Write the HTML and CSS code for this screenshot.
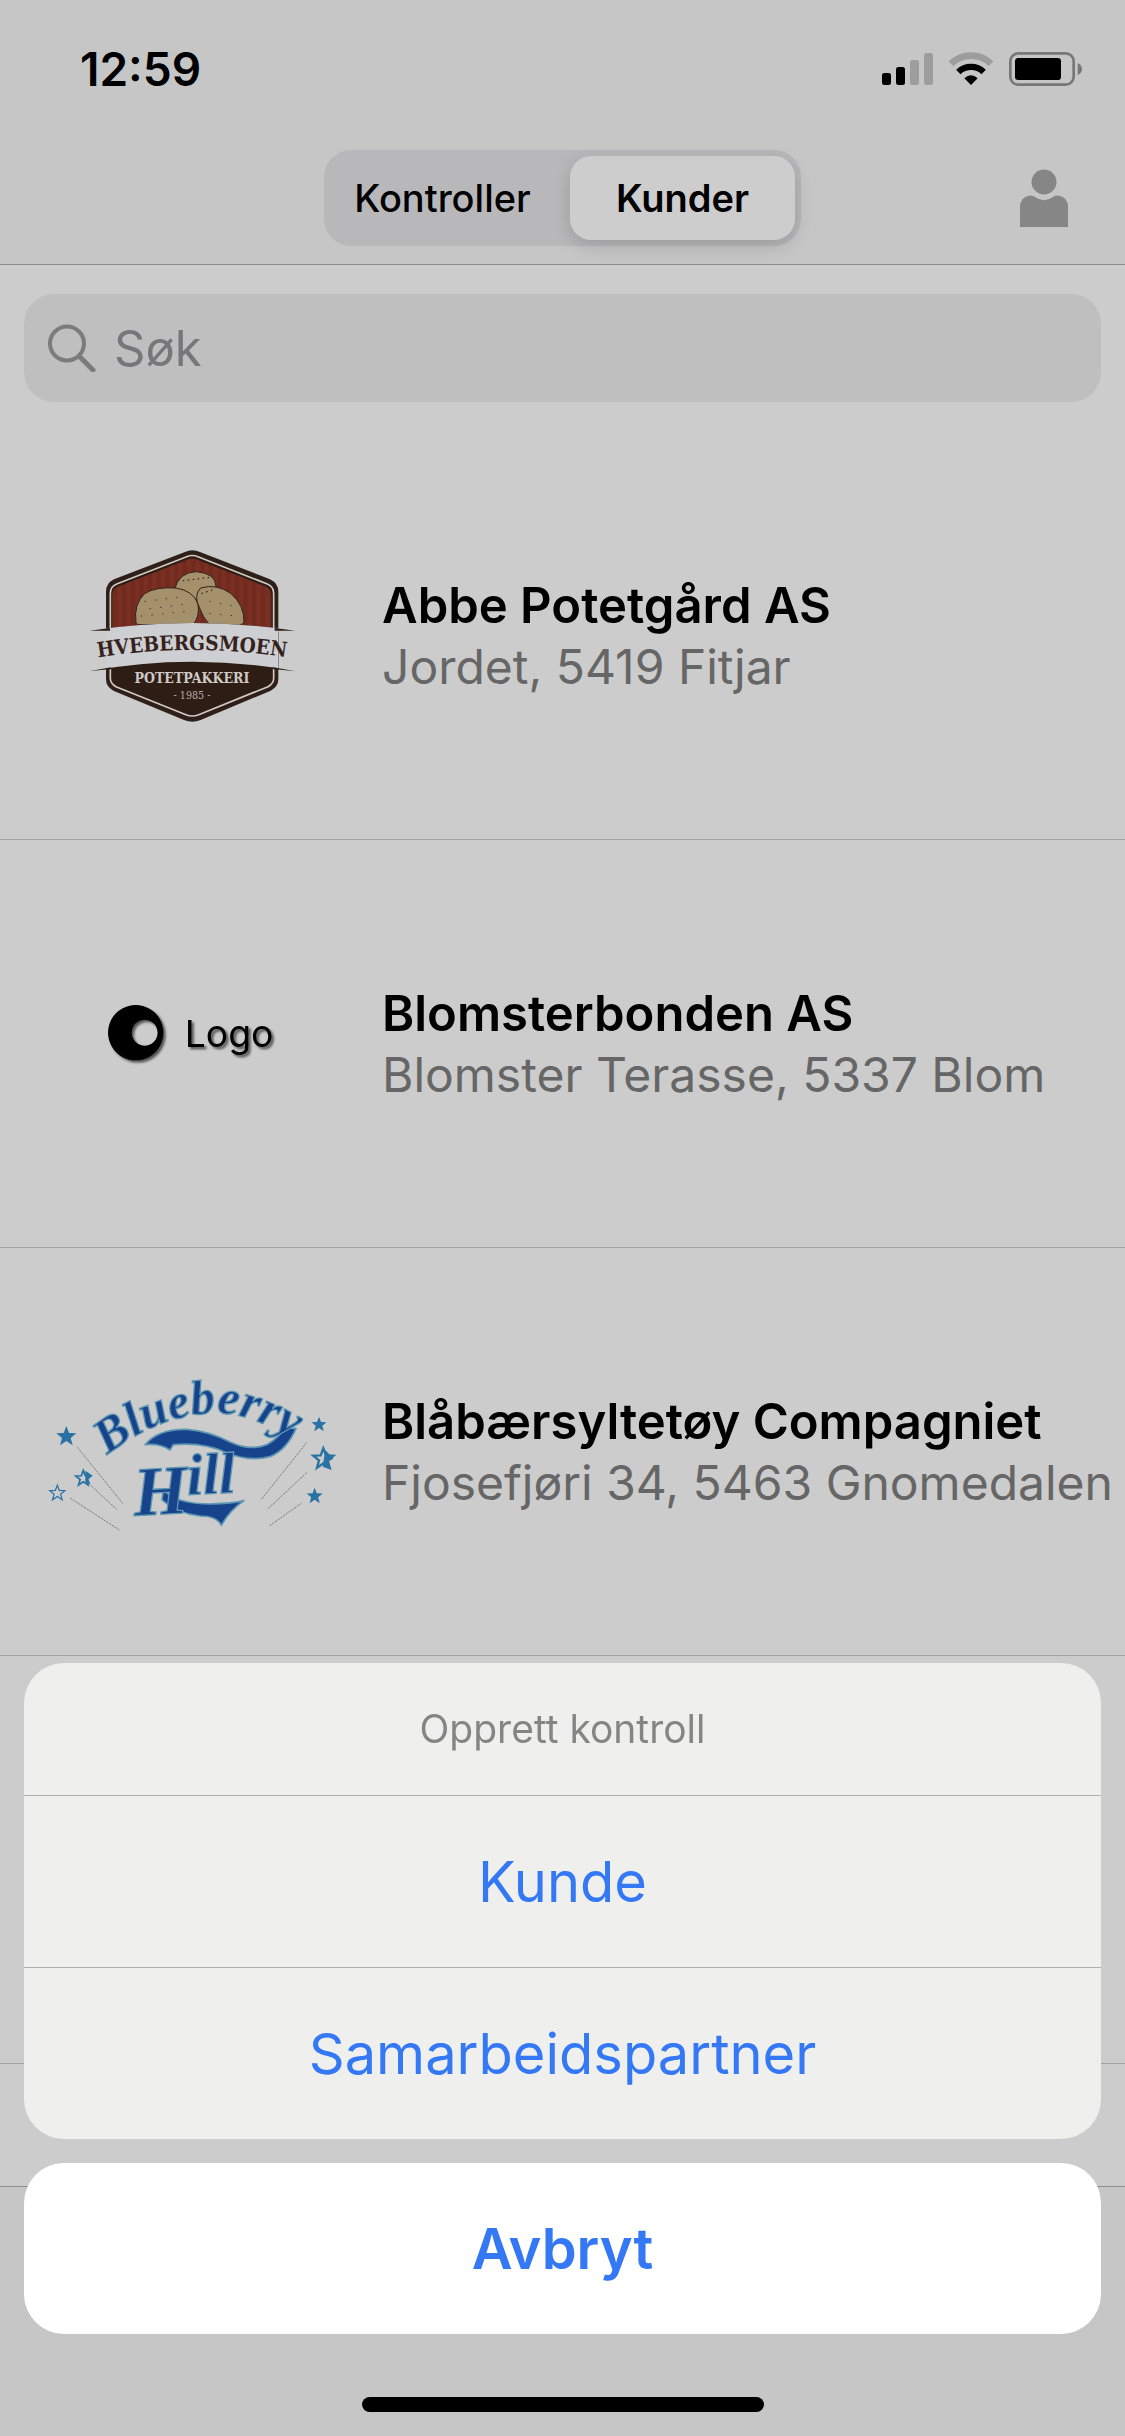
FILE: index.html
```html
<!DOCTYPE html>
<html lang="nb">
<head>
<meta charset="utf-8">
<meta name="viewport" content="width=device-width, initial-scale=1">
<title>Kunder</title>
<link rel="stylesheet" href="styles.css">
</head>
<body>
<div class="app">
  <header class="header">
    <div class="status">
      <time class="status-time">12:59</time>
      <div class="status-icons">
        <svg width="51" height="34" viewBox="0 0 153 102" aria-hidden="true">
          <rect x="0" y="63" width="27" height="36" rx="7"/>
          <rect x="42" y="45" width="27" height="54" rx="7"/>
          <rect x="84" y="24" width="27" height="75" rx="7" fill="#9d9d9d"/>
          <rect x="126" y="3" width="27" height="96" rx="7" fill="#9d9d9d"/>
        </svg>
        <svg width="46" height="34" viewBox="0 0 138 102" aria-hidden="true">
          <path d="M9 35A87 87 0 0 1 129 35" fill="none" stroke="#9d9d9d" stroke-width="20"/>
          <path d="M31 60A55 55 0 0 1 107 60" fill="none" stroke="#000" stroke-width="19"/>
          <path d="M49 79Q69 60 89 79L69 99Z"/>
        </svg>
        <svg width="73" height="34" viewBox="0 0 219 102" aria-hidden="true">
          <rect x="4" y="4" width="190" height="94" rx="24" fill="none" stroke="#777" stroke-width="8"/>
          <rect x="18" y="18" width="138" height="66" rx="10"/>
          <path d="M206 33q13 6 13 18t-13 18z" fill="#777"/>
        </svg>
      </div>
    </div>
    <nav class="nav">
      <div class="segments">
        <button class="segment" type="button">Kontroller</button>
        <button class="segment segment-active" type="button">Kunder</button>
      </div>
      <button class="profile" type="button" aria-label="Profil">
        <svg width="48" height="58" viewBox="0 0 48 58" aria-hidden="true">
          <ellipse cx="24" cy="13" rx="12.500" ry="12.500"/>
          <path d="M0 58V38Q0 28 10 26.500Q13 26 15 28Q24 34.500 33 28Q35 26 38 26.500Q48 28 48 38V58Z"/>
        </svg>
      </button>
    </nav>
  </header>

  <main class="content">
    <div class="search-area">
      <label class="search">
        <svg width="48" height="48" viewBox="0 0 48 48" aria-hidden="true">
          <circle cx="19" cy="19.500" r="17" fill="none" stroke="#7c7c7d" stroke-width="4"/>
          <path d="M32 33L45 46" fill="none" stroke="#7c7c7d" stroke-width="5" stroke-linecap="round"/>
        </svg>
        <input class="search-input" type="search" placeholder="Søk" aria-label="Søk">
      </label>
    </div>

    <ul class="customers">
      <li class="customer">
        <svg class="customer-logo" width="250" height="210" viewBox="-9 3 750 630" role="img" aria-label="Hvebergsmoen Potetpakkeri">
          <defs>
            <pattern id="stripes" width="26" height="26" patternUnits="userSpaceOnUse">
              <rect width="26" height="26" fill="#7b2f21"/>
              <rect width="13" height="26" fill="#702a20"/>
            </pattern>
            <path id="arch" d="M46 388Q366 332 686 388"/>
          </defs>
          <path d="M345 66Q367 56 390 66L600 148Q625 160 625 185V448Q625 470 602 482L392 570Q367 580 342 570L130 482Q108 470 108 448V185Q108 160 132 148Z" fill="#2e2019"/>
          <path d="M350 80Q367 73 384 80L592 162Q611 170 611 190V445Q611 461 594 470L386 554Q367 562 348 554L138 470Q121 461 121 445V190Q121 170 140 162Z" fill="#2e1d15" stroke="#d0c9c4" stroke-width="5"/>
          <path d="M350 90Q367 82 384 90L588 170Q604 178 604 194V300H127V194Q127 178 143 170Z" fill="url(#stripes)"/>
          <g fill="#a5906c" stroke="#30211a" stroke-width="3">
            <path d="M313 180Q326 126 380 125Q436 130 438 168L420 220H340Z"/>
            <path d="M198 278Q190 222 225 190Q258 170 318 174Q370 182 384 222Q390 258 370 284H204Z"/>
            <path d="M388 232Q370 196 392 174Q440 160 482 190Q524 226 522 278L510 286H420Q398 262 388 232Z"/>
          </g>
          <g fill="none" stroke="#30211a" stroke-width="4" stroke-linecap="round">
            <path stroke-dasharray="1 14" d="M340 152L420 142M396 190l30-10"/>
            <path stroke-width="3" stroke-dasharray="1 31" d="M225 214L340 200M214 258L350 244M240 236l110-14M420 214l70 14M420 250l80 8"/>
          </g>
          <path d="M108 296Q366 262 625 296V420Q366 372 108 420Z" fill="#2e1d15"/>
          <path d="M56 302Q366 256 678 302L625 304V414L678 424Q366 366 56 424L108 414V304Z" fill="#cdcfd2"/>
          <path d="M58 302L120 294V302ZM676 302L614 294V302ZM58 424L122 412V417ZM676 424L610 412V417Z" fill="#2e2019"/>
          <text class="badge-name"><textPath href="#arch" startOffset="50%" text-anchor="middle">HVEBERGSMOEN</textPath></text>
          <text class="badge-kind" x="366" y="458" text-anchor="middle">POTETPAKKERI</text>
          <text class="badge-year" x="366" y="508" text-anchor="middle">- 1985 -</text>
        </svg>
        <div class="customer-text">
          <h2 class="customer-name">Abbe Potetgård AS</h2>
          <p class="customer-address">Jordet, 5419 Fitjar</p>
        </div>
      </li>
      <li class="customer">
        <svg class="customer-logo" width="210" height="110" viewBox="-9 27 630 330" role="img" aria-label="Logo">
          <defs>
            <filter id="shadow" x="-20%" y="-20%" width="150%" height="150%">
              <feDropShadow dx="7" dy="7" stdDeviation="3" flood-color="#000" flood-opacity="0.600"/>
            </filter>
          </defs>
          <g filter="url(#shadow)">
            <path fill-rule="evenodd" d="M137 75a83 83 0 1 0 .1 0zM164 119a39 39 0 1 1-.1 0z"/>
            <text class="plain-logo" x="284" y="200">Logo</text>
          </g>
        </svg>
        <div class="customer-text">
          <h2 class="customer-name">Blomsterbonden AS</h2>
          <p class="customer-address">Blomster Terasse, 5337 Blom</p>
        </div>
      </li>
      <li class="customer">
        <svg class="customer-logo" width="320" height="200" viewBox="6 6 960 600" role="img" aria-label="Blueberry Hill">
          <defs>
            <path id="wave" d="M232 316Q380 196 560 188Q700 196 850 310"/>
            <path id="star" d="M0-30L8-9L30-8L13 6L19 28L0 15L-19 28L-13 6L-30-8L-8-9Z"/>
          </defs>
          <g fill="#17428c" stroke="#5d97b2" stroke-width="5" stroke-linejoin="round">
            <path d="M345 284Q385 236 470 238Q540 244 600 276Q660 304 710 284Q750 262 762 232L798 236Q770 300 720 320Q660 336 590 308Q520 276 430 284L420 300Q390 280 345 284Z"/>
            <path d="M400 420Q440 462 540 462Q610 460 642 452Q600 480 574 526Q560 498 510 498Q440 490 396 450Z"/>
          </g>
          <text class="script"><textPath href="#wave">Blueberry</textPath></text>
          <g transform="rotate(-3 330 470)">
            <text class="script"><tspan class="script-cap" x="312" y="496">H</tspan><tspan class="script-tail" x="474" y="442">ill</tspan></text>
          </g>
          <g fill="#2872a4">
            <use href="#star" x="109" y="258"/>
            <use href="#star" transform="translate(867 223) scale(.75)"/>
            <use href="#star" transform="translate(854 437) scale(.8)"/>
          </g>
          <g fill="#ccc" stroke="#2872a4" stroke-width="7">
            <use href="#star" transform="translate(160 384) scale(.75)"/>
            <use href="#star" transform="translate(880 325)"/>
            <use href="#star" transform="translate(82 428) scale(.75)" stroke-width="5"/>
          </g>
          <path d="M166 362l20 14l-12 8l8 20l-16-8ZM886 300l24 26l-14 8l2 24l-20-8z" fill="#2872a4"/>
          <g fill="none" stroke="#555" stroke-width="2" stroke-dasharray="7 3">
            <path d="M142 292L280 462M184 408L260 478M120 444L268 540M830 278L694 448M830 368L712 478M814 460L718 528"/>
          </g>
        </svg>
        <div class="customer-text">
          <h2 class="customer-name">Blåbærsyltetøy Compagniet</h2>
          <p class="customer-address">Fjosefjøri 34, 5463 Gnomedalen</p>
        </div>
      </li>
      <li class="customer" aria-hidden="true"></li>
    </ul>
  </main>
  <footer class="toolbar"></footer>
</div>

<div class="overlay">
  <section class="sheet" aria-labelledby="sheet-title">
    <h1 class="sheet-title" id="sheet-title">Opprett kontroll</h1>
    <button class="sheet-action" type="button">Kunde</button>
    <button class="sheet-action" type="button">Samarbeidspartner</button>
  </section>
  <button class="sheet-cancel" type="button">Avbryt</button>
  <div class="home-indicator"></div>
</div>
</body>
</html>
```
FILE: styles.css
```css
* {
  box-sizing: border-box;
}

body {
  margin: 0;
  background: #ccc;
  color: #000;
  font-family: Inter, "Liberation Sans", sans-serif;
}

button {
  margin: 0;
  padding: 0;
  border: 0;
  background: none;
  color: inherit;
  font: inherit;
}

svg {
  display: block;
  flex: none;
}

.app {
  display: flex;
  flex-direction: column;
  min-height: 100vh;
  overflow: hidden;
}

.header {
  background: #c6c6c6;
  border-bottom: 1px solid #8c8c8c;
}

.status {
  display: flex;
  align-items: center;
  justify-content: space-between;
  height: 132px;
  padding: 6px 43px 0 80px;
}

.status-time {
  font-size: 46px;
  font-weight: 600;
}

.status-icons {
  display: flex;
  gap: 15px;
}

.nav {
  display: grid;
  grid-template-columns: 1fr auto 1fr;
  align-items: center;
  height: 132px;
  padding: 0 57px;
}

.segments {
  display: grid;
  grid-template-columns: 225px 225px;
  grid-column: 2;
  gap: 15px;
  height: 96px;
  padding: 6px;
  border-radius: 27px;
  background: #b8b8ba;
}

.segment {
  border-radius: 21px;
  font-size: 38px;
  font-weight: 500;
}

.segment-active {
  background: #cdcdcd;
  box-shadow: 0 6px 18px rgba(0, 0, 0, 0.15);
  font-weight: 600;
}

.profile {
  justify-self: end;
  fill: #868686;
}

.content {
  flex: 1;
}

.search-area {
  padding: 29px 24px 30px;
}

.search {
  display: flex;
  align-items: center;
  gap: 18px;
  height: 108px;
  padding: 0 24px;
  border-radius: 30px;
  background: #bfbfbf;
}

.search-input {
  flex: 1;
  min-width: 0;
  padding: 0;
  border: 0;
  outline: 0;
  background: none;
  color: #000;
  font: 400 49px Inter, "Liberation Sans", sans-serif;
}

.search-input::placeholder {
  color: #777779;
  opacity: 1;
}

.customers {
  margin: 0;
  padding: 0;
  list-style: none;
}

.customer {
  display: grid;
  grid-template-columns: 336px 1fr;
  align-items: center;
  gap: 22px;
  height: 408px;
  padding-left: 24px;
  border-bottom: 1px solid #a0a0a0;
}

.customer-logo {
  justify-self: center;
}

.customer-text {
  min-width: 0;
  line-height: 61px;
  white-space: nowrap;
}

.customer-name {
  margin: 0;
  font-size: 49px;
  font-weight: 600;
}

.customer-address {
  margin: 0;
  color: #666;
  font-size: 48px;
}

.badge-name {
  fill: #35221b;
  font: 700 62px "DejaVu Serif Condensed", "DejaVu Serif", serif;
}

.badge-kind {
  fill: #cfcac6;
  font: 700 42px "DejaVu Serif Condensed", "DejaVu Serif", serif;
}

.badge-year {
  fill: #b5aca6;
  font: 400 32px "DejaVu Serif Condensed", "DejaVu Serif", serif;
}

.plain-logo {
  font: 400 112px Inter, sans-serif;
}

.script {
  fill: #17428c;
  stroke: #5d97b2;
  stroke-width: 4px;
  font: italic 700 146px "Liberation Serif", serif;
}

.script-cap {
  font-size: 210px;
}

.script-tail {
  font-size: 175px;
}

.toolbar {
  height: 250px;
  border-top: 1px solid #8c8c8c;
  background: #c6c6c6;
}

.overlay {
  position: fixed;
  right: 0;
  bottom: 0;
  left: 0;
  display: flex;
  flex-direction: column;
  gap: 24px;
  padding: 0 24px 24px;
}

.sheet {
  overflow: hidden;
  border-radius: 40px;
  background: #efefee;
}

.sheet-title {
  margin: 0;
  color: #858585;
  font-size: 39px;
  font-weight: 400;
  line-height: 132px;
  text-align: center;
}

.sheet-action {
  display: block;
  width: 100%;
  height: 172px;
  border-top: 1px solid #b0b0b0;
  color: #3478f6;
  font-size: 56px;
}

.sheet-cancel {
  height: 171px;
  border-radius: 40px;
  background: #fff;
  color: #3478f6;
  font-size: 56px;
  font-weight: 600;
}

.home-indicator {
  align-self: center;
  width: 402px;
  height: 15px;
  margin-top: 39px;
  border-radius: 8px;
  background: #000;
}
```
